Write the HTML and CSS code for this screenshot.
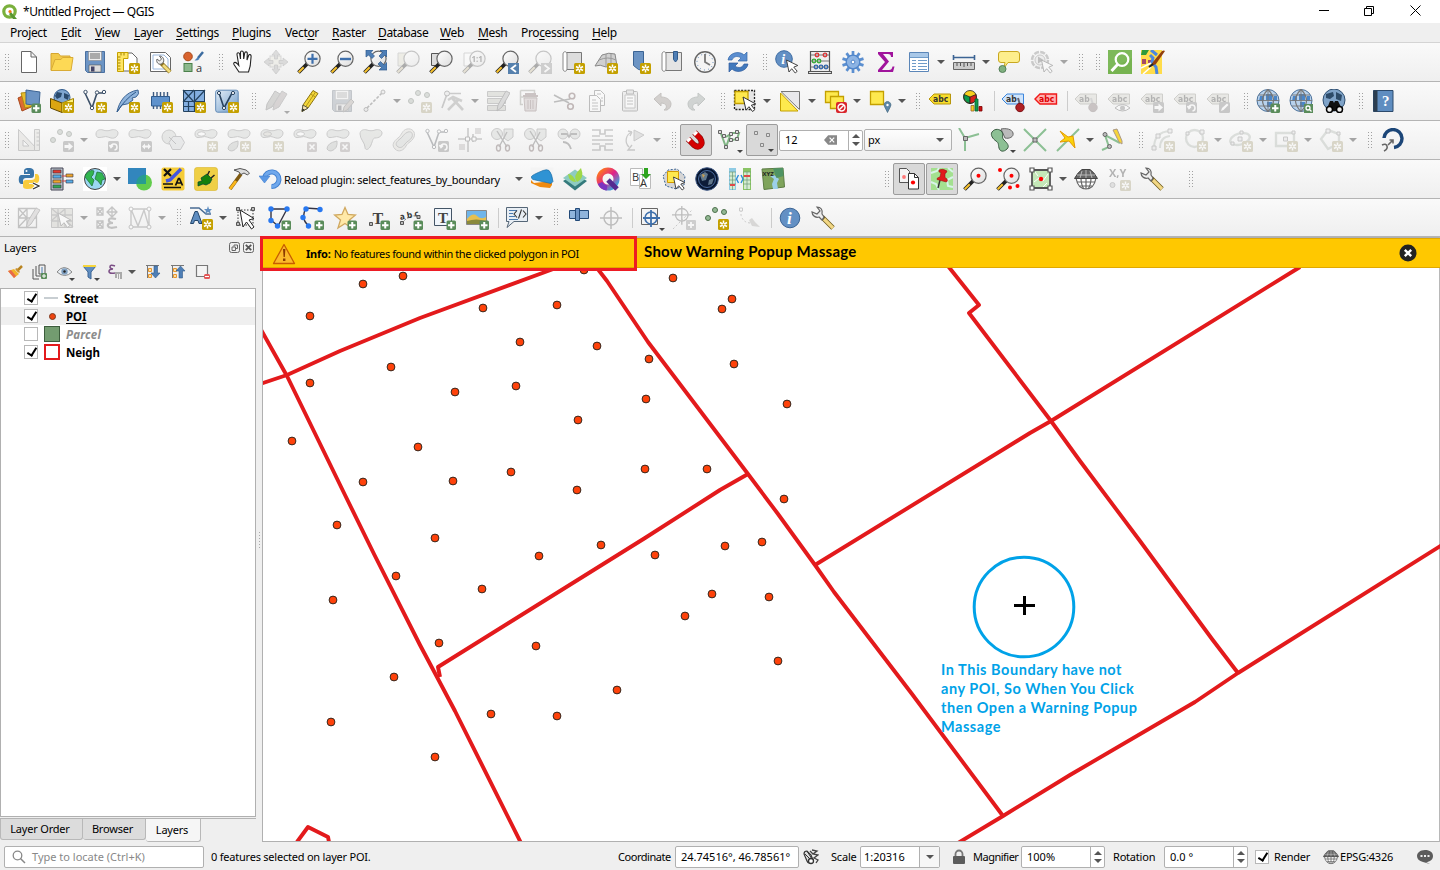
FILE: index.html
```html
<!DOCTYPE html>
<html lang="en">
<head>
<meta charset="utf-8">
<title>*Untitled Project — QGIS</title>
<link rel="stylesheet" href="styles.css">
</head>
<body>
<svg class="sprite" width="0" height="0">
<defs>
<linearGradient id="lens" x1="0" y1="0" x2="1" y2="1"><stop offset="0" stop-color="#fff"/><stop offset="1" stop-color="#ddd"/></linearGradient>
<linearGradient id="blue" x1="0" y1="0" x2="1" y2="1"><stop offset="0" stop-color="#e4eef8"/><stop offset="1" stop-color="#6f9bc8"/></linearGradient>
<linearGradient id="qring" x1="0" y1="0" x2="1" y2="1"><stop offset="0" stop-color="#ff7a1a"/><stop offset=".5" stop-color="#e0218a"/><stop offset="1" stop-color="#27b5e8"/></linearGradient>

<symbol id="b-star" viewBox="0 0 24 24"><rect x="13" y="13" width="11" height="11" rx="1.5" fill="#c4a000"/><path d="M18.500 14.500v8M15 16.500l7 4M22 16.500l-7 4" stroke="#fff" stroke-width="1.500"/><circle cx="18.500" cy="18.500" r="1" fill="#c4a000"/></symbol>
<symbol id="b-plus" viewBox="0 0 24 24"><rect x="14.500" y="14.500" width="9.500" height="9.500" rx="1.500" fill="#5a8c5a"/><path d="M19.250 16v6.500M16 19.250h6.500" stroke="#fff" stroke-width="2"/></symbol>
<symbol id="b-right" viewBox="0 0 24 24"><rect x="13" y="13" width="11" height="11" rx="1.500" fill="#777"/><path d="M14.500 17h4v-2.500l4.500 4-4.500 4V20h-4z" fill="#fff"/></symbol>
<symbol id="b-lr" viewBox="0 0 24 24"><rect x="13" y="13" width="11" height="11" rx="1.500" fill="#777"/><path d="M14 18.500l3-3v2h3v-2l3 3-3 3v-2h-3v2z" fill="#fff"/></symbol>
<symbol id="b-rot" viewBox="0 0 24 24"><rect x="13" y="13" width="11" height="11" rx="1.500" fill="#777"/><path d="M16 19a3 3 0 1 1 3.500 3M14.500 17l1.500 2.500 2-2" fill="none" stroke="#fff" stroke-width="1.500"/></symbol>
<symbol id="b-x" viewBox="0 0 24 24"><rect x="14" y="14" width="10" height="10" rx="1.500" fill="#a78b8b"/><path d="M16.500 16.500l5 5M21.500 16.500l-5 5" stroke="#fff" stroke-width="1.600"/></symbol>
<symbol id="b-pen" viewBox="0 0 24 24"><rect x="13" y="13" width="11" height="11" rx="1.500" fill="#777"/><path d="M15 22l1-3 5-4.500 1.500 1.500-5 5z" fill="#fff"/></symbol>
<symbol id="cursor" viewBox="0 0 24 24"><path d="M11.500 10l2.500 12 2.700-3.300 3.500 4.300 2-1.700-3.400-4.200 4-1.600z" fill="#fff" stroke="#333" stroke-width=".9"/></symbol>
<symbol id="mag" viewBox="0 0 24 24"><path d="M1.500 22.500l9-9" stroke="#222" stroke-width="3.800"/><path d="M1.700 22.300l5-5" stroke="#f6c12d" stroke-width="2"/><circle cx="15.500" cy="8.800" r="7.600" fill="url(#lens)" stroke="#666" stroke-width="1.200"/></symbol>
<symbol id="blob" viewBox="0 0 24 24"><path d="M1 6c0-4 4-5 7-4s5 1 8 0 7 0 7 3-3 6-7 5-4-2-8-1-7 1-7-3z" fill="#c2cec2" stroke="#777"/></symbol>
<symbol id="tag" viewBox="0 0 24 24"><path d="M1 10l5-5h16.500v10H6z"/></symbol>

<symbol id="new" viewBox="0 0 24 24"><path d="M4.500 1.500h9.500l5.500 5.500v15.500h-15zM14 1.500V7h5.500" fill="#fff" stroke="#666"/></symbol>
<symbol id="open" viewBox="0 0 24 24"><path d="M1 20V3.500h7.500l2 2.500H20v4" fill="#f2c94a" stroke="#d5a52f"/><path d="M1 20.500L5 9.500h6l1.500-2H23l-2 13z" fill="#fdd955" stroke="#d9ab35"/></symbol>
<symbol id="save" viewBox="0 0 24 24"><path d="M2.500 1.500h19v21h-17l-2-2z" fill="#6c94c4" stroke="#4a70a0"/><path d="M5.500 1.500h13v9h-13z" fill="#eee" stroke="#888" stroke-width=".6"/><path d="M7 4h10M7 6h10M7 8h10" stroke="#666"/><path d="M6 15h12v7H6z" fill="#ddd" stroke="#555" stroke-width=".6"/><path d="M8 16.500h3.500v5H8z" fill="#446"/></symbol>
<symbol id="layout" viewBox="0 0 24 24"><path d="M4 3h12l5 5v13H4z" fill="#fff" stroke="#666"/><path d="M1.500 2.500H12v6H7.500v13h-6z" fill="#ffe664" stroke="#c4a000"/><path d="M2 7h2.500M2 10h2.500M2 13h2.500M2 16h2.500M2 19h2.500M5 3v2.500M8 3v2.500" stroke="#a08000"/><use href="#b-star"/></symbol>
<symbol id="layoutmgr" viewBox="0 0 24 24"><path d="M1.500 2.500h15l5 5v14h-20z" fill="#fff" stroke="#666"/><path d="M4 5h11l4 4v10H4z" fill="#fff" stroke="#9bb8dd"/><path d="M12 13l9 9" stroke="#8a7020" stroke-width="4.200"/><path d="M14 15l7 7" stroke="#f2dc7c" stroke-width="2.800"/><path d="M8 9c-1 3 1 6 4.500 5l2-2c1-3-1-6-4-6l2 3-2 2z" fill="#eee" stroke="#666"/></symbol>
<symbol id="style" viewBox="0 0 24 24"><circle cx="6" cy="6.500" r="4.300" fill="#d8632e" stroke="#a84818"/><path d="M21 2l-5 6" stroke="#3c6ca0" stroke-width="2.500"/><path d="M12.500 10.500l3.500-3.500 1.500 2q-2 2-5 1.500z" fill="#4a7fb8"/><rect x="2" y="13.500" width="8" height="8" fill="#8cb88c" stroke="#4a804a"/><text x="14" y="21.500" class="glyph" font-size="11">a</text></symbol>
<symbol id="hand" viewBox="0 0 24 24"><path d="M8 22l-5-7.500c-1-2 1-3 3-1l1.800 2L6 4.500C5.800 2.500 8 2.200 8.700 4L9.500 9V2.500c0-2 2.600-2 2.900 0L12.700 9l1-6c.4-1.800 2.700-1.400 2.600.5L16 10l1.600-4.500c.7-1.700 2.800-1 2.500 1L19.200 16 17.500 22z" fill="#fff" stroke="#222" stroke-width="1.100"/></symbol>
<symbol id="panto" viewBox="0 0 24 24"><rect x="6" y="6" width="11" height="11" fill="#e8e3b0" stroke="#999"/><path d="M12 0l4 5h-2.500v4h-3V5H8zM12 24l4-5h-2.500v-4h-3v4H8zM0 12l5-4v2.500h4v3H5V16zM24 12l-5-4v2.500h-4v3h4V16z" fill="#aaa" stroke="#777" stroke-width=".7"/></symbol>
<symbol id="zin" viewBox="0 0 24 24"><use href="#mag"/><path d="M15.500 3.800v10M10.500 8.800h10" stroke="#3f70ac" stroke-width="2.200"/></symbol>
<symbol id="zout" viewBox="0 0 24 24"><use href="#mag"/><path d="M10 9h11" stroke="#3f70ac" stroke-width="2.400"/></symbol>
<symbol id="zfull" viewBox="0 0 24 24"><use href="#mag"/><path d="M3 0h7L8 2.500 11.500 6 9 8.500 5.500 5 3 7zM24 0v7l-2-2-3.500 3.500L16 6l3.500-3.500L17 0zM24 20h-8l2.500-2.500L15 14l2.500-2.500L21 15l3-2.500z" fill="#4e7eb5" stroke="#2f5a8c" stroke-width=".7"/></symbol>
<symbol id="zsel" viewBox="0 0 24 24"><path d="M2 3h12v13H2z" fill="#e4dd90" stroke="#999"/><use href="#mag"/></symbol>
<symbol id="zlayer" viewBox="0 0 24 24"><path d="M2.500 3.500h13v12h-13z" fill="#ddd" stroke="#555"/><use href="#mag"/></symbol>
<symbol id="znative" viewBox="0 0 24 24"><path d="M2 3h12v13H2z" fill="#fff" stroke="#999"/><use href="#mag"/><text x="9.500" y="12" class="glyph b" font-size="8">1:1</text></symbol>
<symbol id="zlast" viewBox="0 0 24 24"><use href="#mag"/><rect x="13" y="13" width="11" height="11" fill="#5580ad"/><path d="M21 15l-4.500 3.500L21 22" fill="none" stroke="#fff" stroke-width="1.800"/></symbol>
<symbol id="znext" viewBox="0 0 24 24"><use href="#mag"/><rect x="13" y="13" width="11" height="11" fill="#888"/><path d="M16.500 15l4.500 3.500-4.500 3.500" fill="none" stroke="#fff" stroke-width="1.800"/></symbol>
<symbol id="mapview" viewBox="0 0 24 24"><path d="M5.500 2.500h15v17h-15z" fill="#ddd" stroke="#777"/><path d="M2 4c0-3 4-3 4 0v15c0 3-4 3-4 0z" fill="#fff" stroke="#888"/><use href="#b-star"/></symbol>
<symbol id="map3d" viewBox="0 0 24 24"><path d="M1 16L8 5q7-3 13-1l2 12q-6-2-11 1-6-3-11-1z" fill="#d0d0d0" stroke="#888"/><path d="M5 10q9-4 17 0M12 4v13M17 4v11" fill="none" stroke="#999"/><use href="#b-star"/></symbol>
<symbol id="bmnew" viewBox="0 0 24 24"><path d="M6.500 1.500h10v19l-5-1-5-4z" fill="#6c94c4" stroke="#3c6494"/><use href="#b-star"/></symbol>
<symbol id="bmshow" viewBox="0 0 24 24"><path d="M5.500 2.500h16v18h-16z" fill="#e4e4e4" stroke="#777"/><path d="M2 4c0-3 4-3 4 0v15c0 3-4 3-4 0z" fill="#fff" stroke="#888"/><path d="M13.500 1.500h4v8l-2 2.500-2-2.500z" fill="#4e7eb5" stroke="#2f5a8c"/></symbol>
<symbol id="clock" viewBox="0 0 24 24"><circle cx="12" cy="12" r="10.300" fill="#f4f4f4" stroke="#666" stroke-width="1.400"/><circle cx="12" cy="12" r="8" fill="none" stroke="#5b86b8" stroke-dasharray="1 3.190"/><path d="M12 4v8l5 3" fill="none" stroke="#777" stroke-width="1.800"/></symbol>
<symbol id="refresh" viewBox="0 0 24 24"><path d="M2 10c1-7 11-10 16-5l3-3v9h-9l3-3c-4-3-8-1-9 2z" fill="#5b8ed0" stroke="#3467a8" stroke-width=".7"/><path d="M22 14c-1 7-11 10-16 5l-3 3v-9h9l-3 3c4 3 8 1 9-2z" fill="#4179bd" stroke="#2f5a9c" stroke-width=".7"/></symbol>
<symbol id="identify" viewBox="0 0 24 24"><circle cx="9" cy="9" r="8.300" fill="#6390c4" stroke="#3c6ca4"/><text x="6.200" y="14" class="serif-i" font-size="14">i</text><use href="#cursor"/></symbol>
<symbol id="abacus" viewBox="0 0 24 24"><path d="M2.500 21V1.500h19V21M.5 21.500h23v2H.5z" fill="#eee" stroke="#555" stroke-width="1.200"/><path d="M3 5h18M3 11h18M3 17h18" stroke="#777"/><g fill="none" stroke-width="1.300"><g stroke="#d33"><circle cx="9" cy="5" r="1.800"/><circle cx="17" cy="5" r="1.800"/></g><g stroke="#3a3"><circle cx="6" cy="11" r="1.800"/><circle cx="11" cy="11" r="1.800"/></g><g stroke="#36a"><circle cx="8" cy="17" r="1.800"/><circle cx="13" cy="17" r="1.800"/><circle cx="18" cy="17" r="1.800"/></g></g></symbol>
<symbol id="gear" viewBox="0 0 24 24"><path d="M12 1v22M5.500 3.100l13 17.800M1.500 8.600l21 6.800M1.500 15.400l21-6.800M5.500 20.900l13-17.800" stroke="#5b8fd0" stroke-width="2.700"/><circle cx="12" cy="12" r="6.800" fill="#8db4e4" stroke="#5186ca" stroke-width="1.300"/><circle cx="12" cy="12" r="1.900" fill="#fff" stroke="#4f84c8"/></symbol>
<symbol id="sigma" viewBox="0 0 24 24"><path d="M4 2h15v5h-2c0-2-1-3-3-3H9l6 7.500L8 20h7c2 0 3-1 3.500-3.500h2L19 22H4v-2l7-8-7-8z" fill="#a0149c"/></symbol>
<symbol id="table" viewBox="0 0 24 24"><path d="M2.500 2.500h19v19h-19z" fill="#fff" stroke="#5b86b8"/><path d="M3 3h18v4H3z" fill="#a9c8e8"/><path d="M3 7.500h18M5 10.500h4M11 10.500h9M5 13.500h4M11 13.500h9M5 16.500h4M11 16.500h9M5 19.500h4M11 19.500h9" stroke="#6f9bc8"/></symbol>
<symbol id="measure" viewBox="0 0 24 24"><path d="M1 7.500h22M1.500 5v5M22.500 5v5" stroke="#3c6494" stroke-width="1.600"/><path d="M1.500 12.500h21v7h-21z" fill="#ccc" stroke="#666"/><path d="M5 13v3M8.500 13v3M12 13v4M15.500 13v3M19 13v3" stroke="#555"/></symbol>
<symbol id="maptip" viewBox="0 0 24 24"><path d="M4 1.500h16q2.500 0 2.500 2.500v6q0 2.500-2.500 2.500h-9L7 18l1-5.500H4q-2.500 0-2.500-2.500V4q0-2.500 2.500-2.500z" fill="#fdee8c" stroke="#c9a820"/><circle cx="5.500" cy="19" r="3.500" fill="#7fb07f" stroke="#55805a"/></symbol>
<symbol id="action" viewBox="0 0 24 24"><circle cx="10" cy="10" r="8" fill="#eee" stroke="#777" stroke-width="2.500" stroke-dasharray="5 1.280"/><circle cx="10" cy="10" r="5" fill="#ddd" stroke="#777"/><path d="M8 6.500v7l5.500-3.500z" fill="#555"/><use href="#cursor"/></symbol>
<symbol id="qms" viewBox="0 0 24 24"><path d="M0 0h24v24H0z" fill="#76b350"/><path d="M0 0h24v8L0 20z" fill="#82bd60" opacity=".6"/><circle cx="14" cy="9.500" r="6.300" fill="none" stroke="#fff" stroke-width="2.200"/><path d="M10 14l-6.500 7" stroke="#fff" stroke-width="3"/></symbol>
<symbol id="osm" viewBox="0 0 24 24"><path d="M0 0h21v24H0z" fill="#ffdc4a"/><path d="M1 0h7l-3 5H0z" fill="#2c9a3a"/><path d="M1 9h4v5H1zM7 10h4v3H7z" fill="#a34a68"/><path d="M9 5l3 3-1 4 4 5 1 7M10 0l6 5" fill="none" stroke="#4b86e0" stroke-width="3"/><path d="M0 18l10-5M2 24l8-7" stroke="#fff" stroke-width="1.500"/><path d="M9 17l3-5L21 1q2-1 3 0L15 14z" fill="#93400e"/><path d="M8 17l4-3" stroke="#222" stroke-width="2"/></symbol>

<symbol id="dsm" viewBox="0 0 24 24"><path d="M1 9l9-4 4 13-9 4z" fill="#dd6a34" stroke="#a8481c"/><path d="M4 4l10-1 3 14-9 2z" fill="#e8bd2c" stroke="#b08a10"/><path d="M9 1l14 2-1 14-13-2z" fill="#6c94c4" stroke="#3c6494"/><use href="#b-plus"/></symbol>
<symbol id="gpkg" viewBox="0 0 24 24"><circle cx="12" cy="8.500" r="8" fill="#7fa6d0" stroke="#2f5a8c"/><path d="M7 3l5 1-1 4-4 2-2-3zM14 4l5 2-1 5-4-2z" fill="#2a4a6c"/><path d="M.5 9.500L12 14v9.500L.5 19z" fill="#dca512" stroke="#604800"/><path d="M23.500 9.500L12 14v9.500l11.500-4z" fill="#fff27a" stroke="#a08000"/><use href="#b-star"/></symbol>
<symbol id="shp" viewBox="0 0 24 24"><path d="M2 4l7 15 5-15h7" fill="none" stroke="#3c5068" stroke-width="1.600"/><g fill="#fff" stroke="#3c5068"><circle cx="2.500" cy="3" r="1.700"/><circle cx="9" cy="19" r="1.700"/><circle cx="14" cy="3.500" r="1.700"/><circle cx="21" cy="3" r="1.700"/></g></symbol>
<symbol id="shpnew" viewBox="0 0 24 24"><use href="#shp"/><use href="#b-star"/></symbol>
<symbol id="spatialite" viewBox="0 0 24 24"><path d="M1 23C3 13 9 3 22 1q2 4-2 7l-4 1 1 2q-5 5-11 5z" fill="#8fb4dc" stroke="#3c6494"/><path d="M1 23Q9 10 20 3" fill="none" stroke="#2f5a8c"/><use href="#b-star"/></symbol>
<symbol id="chip" viewBox="0 0 24 24"><path d="M4.500 3v4M8 3v4M11.500 3v4M15 3v4M18.500 3v4M4.500 17v3M8 17v3M11.500 17v3" stroke="#3c5a80" stroke-width="1.400"/><path d="M2.500 7.500h18v9.500h-18z" fill="#5f92cc" stroke="#2f5a8c"/><use href="#b-star"/></symbol>
<symbol id="mesh" viewBox="0 0 24 24"><path d="M1.500 1.500h21v21h-21z" fill="#83aee0" stroke="#24425f"/><path d="M12.500 1v22M1 12.500h22M1 17.500h11M1 1l11 12M12 1L1 13M12 13L23 1M6.500 13v10" fill="none" stroke="#24425f" stroke-width="1.200"/><use href="#b-star"/></symbol>
<symbol id="virtual" viewBox="0 0 24 24"><rect x=".7" y="1.200" width="22.500" height="22" rx="2" fill="url(#blue)" stroke="#5f88b5"/><path d="M4 4l5 15L17 4h3" fill="none" stroke="#27425f" stroke-width="1.600"/><g fill="#fff" stroke="#27425f"><circle cx="4" cy="4" r="1.600"/><circle cx="9" cy="19" r="1.600"/><circle cx="18" cy="4" r="1.600"/></g><use href="#b-star"/></symbol>
<symbol id="pencil" viewBox="0 0 24 24"><path d="M5 22.500L6 16 16 1.500l5 3L11 19z" fill="#f3d63a" stroke="#8c7410"/><path d="M13.500 5l5 3M18.500 3L8.500 18" stroke="#b59818" fill="none"/><path d="M5 22.500L6 16l5 3z" fill="#f7e3b0" stroke="#554"/><path d="M5 22.500l.6-3 2 1.300z" fill="#222"/></symbol>
<symbol id="edits" viewBox="0 0 24 24"><path d="M2 21l1-6L11 2l5 3-8 13z" fill="#9c9c8c" stroke="#666"/><path d="M9 21l1-6L18 2l5 3-8 13z" fill="#b89090" stroke="#777"/></symbol>
<symbol id="saveedit" viewBox="0 0 24 24"><use href="#save"/><path d="M13 23l1-5 7-8 3 3-7 8z" fill="#b98" stroke="#666"/></symbol>
<symbol id="line" viewBox="0 0 24 24"><path d="M4 19L19 4" stroke="#555" stroke-width="1.600" stroke-dasharray="3 1.500"/><circle cx="3" cy="20.500" r="2" fill="#ddd" stroke="#555"/><circle cx="20" cy="3" r="2" fill="#ddd" stroke="#555"/></symbol>
<symbol id="dots" viewBox="0 0 24 24"><g fill="#93b893" stroke="#4d704d"><circle cx="3" cy="12" r="2.500"/><circle cx="10" cy="4" r="2.500"/><circle cx="19" cy="6" r="2.500"/></g></symbol>
<symbol id="addpts" viewBox="0 0 24 24"><use href="#dots"/><use href="#b-star"/></symbol>
<symbol id="vertex" viewBox="0 0 24 24"><path d="M6 5L1 19M6 4.500h14" stroke="#777" stroke-width="1.700"/><circle cx="6" cy="4.500" r="2.500" fill="#ddd" stroke="#555"/><path d="M7 21L18 10M11 9l11 12M7 11l5-3 9 4" fill="none" stroke="#8c8c84" stroke-width="2.600"/></symbol>
<symbol id="multi" viewBox="0 0 24 24"><path d="M1.500 2.500h18v5h-18zM1.500 9.500h18v5h-18zM1.500 16.500h18v5h-18z" fill="#bcc09c" stroke="#777"/><path d="M11 22l1-6 8-14 4 2-8 14z" fill="#aaa" stroke="#555"/></symbol>
<symbol id="del" viewBox="0 0 24 24"><path d="M1.500 1.500h14v5M1.500 1.500v14H4M1.500 8H18" fill="none" stroke="#8c906c" stroke-width="1.500"/><path d="M4 7h15M7 7V5h9v2" fill="none" stroke="#a55" stroke-width="2"/><path d="M5 9h13l-1 13H6z" fill="#daa" stroke="#a55"/><path d="M9 11v9M11.500 11v9M14 11v9" stroke="#a55"/></symbol>
<symbol id="cut" viewBox="0 0 24 24"><path d="M2 6l15 8M2 13l16-3" stroke="#555" stroke-width="1.600"/><circle cx="20" cy="7" r="2.800" fill="none" stroke="#933" stroke-width="1.600"/><circle cx="18.500" cy="17.500" r="2.800" fill="none" stroke="#933" stroke-width="1.600"/></symbol>
<symbol id="copy" viewBox="0 0 24 24"><path d="M9.500 1.500h6l4 4v11h-10z" fill="#fff" stroke="#555"/><path d="M4.500 6.500h7l4 4v12h-11z" fill="#fff" stroke="#555"/><path d="M7 11h4M7 14h6M7 17h6M7 20h6M12 5h4M16 9h2M16 12h2" stroke="#666"/></symbol>
<symbol id="paste" viewBox="0 0 24 24"><rect x="4.500" y="2.500" width="15" height="19.500" rx="1" fill="#ddd" stroke="#555"/><path d="M7 6h10v13H7z" fill="#fff" stroke="#777"/><path d="M8.500 1h7v4h-7z" fill="#ccc" stroke="#555"/><path d="M9 9h6M9 12h6M9 15h6" stroke="#666"/></symbol>
<symbol id="undo" viewBox="0 0 24 24"><path d="M3 10l7-6v4c7 0 10 4 10 7 0 3-2 5-4 6h-3c4-2 3-7-3-7v3z" fill="#a8866c" stroke="#7c5c44"/></symbol>
<symbol id="redo" viewBox="0 0 24 24"><path d="M21 10l-7-6v4C7 8 4 12 4 15c0 3 2 5 4 6h3c-4-2-3-7 3-7v3z" fill="#7c9c90" stroke="#4c7464"/></symbol>
<symbol id="select" viewBox="0 0 24 24"><path d="M1.500 1.500h20v19h-20z" fill="#e6e6e6" stroke="#222" stroke-dasharray="2 1.300" stroke-width="1.300"/><path d="M2 2.500h13v12H2z" fill="#fee94e" stroke="#c4a000" stroke-width="1.300"/><path d="M10 8l3 13 3-3.300 3.500 4.800 2.300-1.800-3.500-4.500 4.500-1.200z" fill="#fff" stroke="#333"/></symbol>
<symbol id="selval" viewBox="0 0 24 24"><path d="M3 2.500h18.500v18z" fill="#e8e8ec" stroke="#777"/><path d="M2.500 4v18h17.500z" fill="#fee94e" stroke="#c4a000"/></symbol>
<symbol id="desel" viewBox="0 0 24 24"><path d="M2.500 2.500h13v11h-13z" fill="#fee94e" stroke="#c4a000" stroke-width="1.300"/><path d="M7.500 7.500h13v12h-13z" fill="#fee94e" stroke="#c4a000" stroke-width="1.300"/><rect x="13" y="13" width="11" height="11" rx="2" fill="#d9252b"/><circle cx="18.500" cy="18.500" r="3.500" fill="none" stroke="#fff" stroke-width="1.400"/><path d="M16 21l5-5" stroke="#fff" stroke-width="1.400"/></symbol>
<symbol id="selloc" viewBox="0 0 24 24"><path d="M2.500 2.500h13v13h-13z" fill="#fee94e" stroke="#c4a000" stroke-width="1.300"/><path d="M19.500 23.500l-3-6a3.400 3.400 0 1 1 6 0z" fill="#5d87a8" stroke="#44677f" stroke-width=".7"/><circle cx="19.500" cy="16" r="1.200" fill="#fff"/></symbol>
<symbol id="label" viewBox="0 0 24 24"><g fill="#f7dd2c" stroke="#b8960c"><use href="#tag"/></g><text x="5" y="13" class="tagtxt">abc</text></symbol>
<symbol id="diagram" viewBox="0 0 24 24"><circle cx="9" cy="8" r="6.500" fill="#f7cf1e" stroke="#222" stroke-width=".8"/><path d="M9 8L3 5.500q-1.500 7 6 9z" fill="#0c9a4a" stroke="#222" stroke-width=".8"/><path d="M9 8v6.500q8-1 6-9z" fill="#d9211c" stroke="#222" stroke-width=".8"/><path d="M14 10h3v12h-3z" fill="#11994c" stroke="#063" stroke-width=".8"/><path d="M10 16.500h3V22h-3z" fill="#f7cf1e" stroke="#963" stroke-width=".8"/><path d="M18 17.500h3V22h-3z" fill="#c11" stroke="#700" stroke-width=".8"/></symbol>
<symbol id="labpin" viewBox="0 0 24 24"><g fill="#cfe4fb" stroke="#3c86dc"><use href="#tag"/></g><text x="5" y="13" class="tagtxt">ab</text><path d="M17 9l2 7" stroke="#667" stroke-width="2"/><circle cx="19" cy="18.500" r="4.200" fill="#b01f24" stroke="#7c1014"/></symbol>
<symbol id="labred" viewBox="0 0 24 24"><g fill="#ffb0b0" stroke="#f01818" stroke-width="1.400"><use href="#tag"/></g><text x="5" y="13" class="tagtxt red">abc</text></symbol>
<symbol id="labg" viewBox="0 0 24 24"><g fill="#d5d0a8" stroke="#8c8760"><use href="#tag"/></g><text x="5" y="13" class="tagtxt">abc</text></symbol>
<symbol id="labg-pin" viewBox="0 0 24 24"><g fill="#d5d0a8" stroke="#8c8760"><use href="#tag"/></g><text x="5" y="13" class="tagtxt">ab</text><path d="M17 9l2 7" stroke="#999" stroke-width="2"/><circle cx="19" cy="18.500" r="4.200" fill="#a06060" stroke="#855"/></symbol>
<symbol id="labg-eye" viewBox="0 0 24 24"><use href="#labg"/><path d="M8 19q7.500-7 15 0-7.500 6-15 0z" fill="#fff" stroke="#555"/><circle cx="15.500" cy="19" r="2.500" fill="#777"/></symbol>
<symbol id="labg-mv" viewBox="0 0 24 24"><use href="#labg"/><use href="#b-right"/></symbol>
<symbol id="labg-rot" viewBox="0 0 24 24"><use href="#labg"/><use href="#b-rot"/></symbol>
<symbol id="labg-ed" viewBox="0 0 24 24"><use href="#labg"/><use href="#b-pen"/></symbol>
<symbol id="globe" viewBox="0 0 24 24"><circle cx="12" cy="11.500" r="11" fill="#b8d2ec" stroke="#4a6f98"/><path d="M4 7h4v5H3zM10 5h6v6h-6zM11 13h5v5h-5zM18 7h3v5h-3z" fill="#4b86c8"/><path d="M1 11.500h22M3 6h18M3 17h18M12 .5v22" stroke="#777" stroke-width=".9"/><path d="M12 .5q-11 11 0 22M12 .5q11 11 0 22" fill="none" stroke="#777" stroke-width="1.200"/></symbol>
<symbol id="globeadd" viewBox="0 0 24 24"><use href="#globe"/><use href="#b-plus"/></symbol>
<symbol id="globefind" viewBox="0 0 24 24"><use href="#globe"/><rect x="15" y="15" width="9" height="9" fill="#5a8c5a"/><circle cx="19" cy="19" r="2" fill="none" stroke="#fff" stroke-width="1.300"/><path d="M20.500 20.500l2 2" stroke="#fff" stroke-width="1.300"/></symbol>
<symbol id="metas" viewBox="0 0 24 24"><circle cx="12" cy="11" r="11" fill="#7fa3c8" stroke="#2f4f70"/><path d="M4 5l7-2 1 4-4 3-4-1zM14 3l6 3-1 6-5-2z" fill="#2d4b68"/><path d="M4 22l4-10h3l1 2 1-2h3l5 10z" fill="#111"/><circle cx="7.500" cy="20.500" r="3" fill="#eee" stroke="#000" stroke-width="1.500"/><circle cx="17.500" cy="20.500" r="3" fill="#eee" stroke="#000" stroke-width="1.500"/></symbol>
<symbol id="help" viewBox="0 0 24 24"><path d="M2.500 1.500h19.500v21H2.500z" fill="#5f8dc0" stroke="#2c4a6c"/><path d="M2.500 1.500h4v21h-4z" fill="#2c3e50"/><text x="11" y="17" class="serifw" font-size="15">?</text></symbol>

<symbol id="advdig" viewBox="0 0 24 24"><path d="M1.500 1.500v21h20z" fill="#dcd2c4" stroke="#777"/><path d="M6 12v6h6z" fill="#f6f6f6" stroke="#777"/><path d="M17.500 1.500h5v21h-5z" fill="#ddd8c4" stroke="#777"/><path d="M19.500 5h3M19.500 9h3M19.500 13h3M19.500 17h3" stroke="#777"/></symbol>
<symbol id="movef" viewBox="0 0 24 24"><use href="#dots"/><use href="#b-right"/></symbol>
<symbol id="rotf" viewBox="0 0 24 24"><use href="#blob"/><use href="#b-rot"/></symbol>
<symbol id="scalef" viewBox="0 0 24 24"><use href="#blob"/><use href="#b-lr"/></symbol>
<symbol id="simp" viewBox="0 0 24 24"><circle cx="8" cy="9" r="7" fill="#c2cec2" stroke="#777"/><path d="M8 14.500l4-6h8l3.500 6-4 7h-8z" fill="#ccd4dc" stroke="#778"/><path d="M8 9l7 7" stroke="#667"/></symbol>
<symbol id="ring" viewBox="0 0 24 24"><use href="#blob"/><ellipse cx="7.500" cy="6" rx="4" ry="2.200" fill="#fff" stroke="#777"/><use href="#b-star"/></symbol>
<symbol id="part" viewBox="0 0 24 24"><use href="#blob"/><path d="M1 21q0-6 10-8 1 8-6 10-3 0-4-2z" fill="#b4c0b4" stroke="#777"/><use href="#b-star"/></symbol>
<symbol id="fillr" viewBox="0 0 24 24"><use href="#blob"/><ellipse cx="7.500" cy="6" rx="4" ry="2.200" fill="#cdc8a0" stroke="#777"/><use href="#b-star"/></symbol>
<symbol id="delr" viewBox="0 0 24 24"><use href="#blob"/><ellipse cx="7.500" cy="6" rx="4" ry="2.200" fill="#fff" stroke="#777"/><use href="#b-x"/></symbol>
<symbol id="delp" viewBox="0 0 24 24"><use href="#blob"/><path d="M1 21q0-6 10-8 1 8-6 10-3 0-4-2z" fill="#b4c0b4" stroke="#777"/><use href="#b-x"/></symbol>
<symbol id="reshape" viewBox="0 0 24 24"><path d="M1 6c0-4 4-5 7-4s5 1 8 0 7 0 7 3-3 5-7 5c-2 0-2 2-4 7s-6 6-6 2c0-4-5-8-5-13z" fill="#c6cfba" stroke="#777"/></symbol>
<symbol id="offset" viewBox="0 0 24 24"><path d="M3 21c-4-4-1-8 3-11s4-8 9-9 9 3 7 8-6 5-8 9-7 7-11 3z" fill="#ddd6c0" stroke="#888"/><path d="M5 18c-2-2 0-5 3-7s4-6 8-7 5 2 4 5-5 4-7 7-5 5-8 2z" fill="#c2cec2" stroke="#777"/></symbol>
<symbol id="revline" viewBox="0 0 24 24"><use href="#shp"/><use href="#b-rot"/></symbol>
<symbol id="trim" viewBox="0 0 24 24"><path d="M0 11h24M10 0v24M15 6v8" stroke="#777" stroke-width="1.600"/><path d="M7.500 9h4v4h-4zM14 9h4v4h-4z" fill="#fff" stroke="#555"/><path d="M1 16h6v6H1zM17 0h6v6h-6z" fill="#baa"/></symbol>
<symbol id="split" viewBox="0 0 24 24"><circle cx="6" cy="6" r="5.500" fill="#c2cec2" stroke="#777"/><path d="M13 1h9v8l-5 4-4-3z" fill="#c2cec2" stroke="#777"/><path d="M6 3l10 16M16 4L8 19" stroke="#555" stroke-width="1.400"/><ellipse cx="7.500" cy="20" rx="2" ry="3" fill="none" stroke="#844" stroke-width="1.400"/><ellipse cx="16.500" cy="20" rx="2" ry="3" fill="none" stroke="#844" stroke-width="1.400"/></symbol>
<symbol id="merge" viewBox="0 0 24 24"><circle cx="6" cy="6" r="5" fill="#c2cec2" stroke="#777"/><circle cx="18" cy="6" r="5" fill="#c2cec2" stroke="#777"/><path d="M4 6h6l2 3 2-3h6M6 14q6 0 8 7" fill="none" stroke="#555" stroke-width="1.800"/></symbol>
<symbol id="mergeattr" viewBox="0 0 24 24"><path d="M2 2h8v4h5V2h8M2 12h21M2 8h8M15 8h8M2 22h8v-4h5v4h8M2 16h8M15 16h8" fill="none" stroke="#777" stroke-width="1.700"/></symbol>
<symbol id="rotpt" viewBox="0 0 24 24"><path d="M6 19A9 9 0 0 1 9 4M9 4l-4-1M9 4l-2 4M12 22H5l4-5" fill="none" stroke="#777" stroke-width="1.300"/><path d="M11 2l10 5-10 6z" fill="#bbb" stroke="#777"/></symbol>
<symbol id="magnet" viewBox="0 0 24 24"><path d="M4 11l6 6q4 3 6.500.5T16 10l-5.500-5.500" fill="none" stroke="#8c0a0a" stroke-width="6"/><path d="M4 11l6 6q4 3 6.500.5T16 10l-5.500-5.500" fill="none" stroke="#d40000" stroke-width="4.600"/><path d="M3.700 10.700l2.200 2.200M10.300 4.200l2.200 2.200" stroke="#fff" stroke-width="4.400"/></symbol>
<symbol id="snapv" viewBox="0 0 24 24"><path d="M3 3l6 16 5-14M9 9l6-4h7l-2 6-9 2" fill="none" stroke="#7fb583" stroke-width="2"/><g fill="#ddd" stroke="#666"><path d="M1.500 2.500h3v3h-3zM5.500 6.500h3v3h-3zM7.500 17.500h3v3h-3zM12.500 4.500h3v3h-3zM12.500 10.500h3v3h-3zM18.500 2.500h3v3h-3zM18.500 9.500h3v3h-3z"/></g></symbol>
<symbol id="snapt" viewBox="0 0 24 24"><path d="M4.500 3.500h3v3h-3zM16.500 5.500h3v3h-3zM10.500 15.500h3v3h-3z" fill="#ddd" stroke="#888"/></symbol>
<symbol id="topo" viewBox="0 0 24 24"><path d="M2 0l6 10 14-4M8 10v13" fill="none" stroke="#8cc094" stroke-width="2"/><path d="M6.500 8.500h4v4h-4z" fill="#bbb" stroke="#666"/></symbol>
<symbol id="overlap" viewBox="0 0 24 24"><path d="M11 1c5-1 11 0 12 4s-4 6-8 5z" fill="#bbb" stroke="#666"/><path d="M2 4c3-4 8-3 10 0s-1 5 2 8 6 6 3 9-7 3-8-1 0-5-3-7-6-6-4-9z" fill="#8cc094" stroke="#3c5c44"/></symbol>
<symbol id="xsect" viewBox="0 0 24 24"><path d="M1 1l22 22M23 1L1 23" stroke="#8cc094" stroke-width="2"/><path d="M10 10h4v4h-4z" fill="#bbb" stroke="#666"/></symbol>
<symbol id="selfsnap" viewBox="0 0 24 24"><path d="M23 1L1 23" stroke="#8cc094" stroke-width="2"/><path d="M4 3l8 6 5-1 2 12-6-7-9 1 5-4z" fill="#fad20a" stroke="#e59a00"/></symbol>
<symbol id="trace" viewBox="0 0 24 24"><path d="M1 22l7-3L4 7l15 8" fill="none" stroke="#8cc094" stroke-width="2"/><circle cx="4" cy="6.500" r="2" fill="#bbb" stroke="#666"/><circle cx="8.500" cy="18.500" r="2" fill="#bbb" stroke="#666"/><path d="M12 2l4-1 5 12v3l-3-2z" fill="#f7d53a" stroke="#a98"/></symbol>
<symbol id="arc" viewBox="0 0 24 24"><path d="M3 20Q3 4 19 3M9 20Q9 9 19 8" fill="none" stroke="#9ab89a" stroke-width="2"/><path d="M1 18h4v4H1zM17 1h4v4h-4zM5 6h4v4H5z" fill="#ddd" stroke="#777"/><use href="#b-star"/></symbol>
<symbol id="circ" viewBox="0 0 24 24"><circle cx="10.500" cy="10.500" r="8.500" fill="none" stroke="#9ab89a" stroke-width="2.400"/><path d="M2 4h3v3H2zM16 2h4v4h-4z" fill="#ddd" stroke="#777"/><use href="#b-star"/></symbol>
<symbol id="ell" viewBox="0 0 24 24"><ellipse cx="11" cy="11" rx="10" ry="5.500" fill="none" stroke="#9ab89a" stroke-width="2.400" transform="rotate(-15 11 11)"/><path d="M9 9h4v4H9zM11 3h3v3h-3zM2 14h3v3H2z" fill="#ddd" stroke="#777"/><use href="#b-star"/></symbol>
<symbol id="rectg" viewBox="0 0 24 24"><path d="M2 5h18v13H2z" fill="none" stroke="#9ab89a" stroke-width="2.400"/><path d="M9.500 9h4v4h-4zM18 3h3v3h-3z" fill="#ddd" stroke="#777"/><use href="#b-star"/></symbol>
<symbol id="polyg" viewBox="0 0 24 24"><path d="M9 2l11 4v9L9 21 2 11z" fill="none" stroke="#9ab89a" stroke-width="2.400"/><path d="M7 1h4v4H7zM18 4h3v3h-3z" fill="#ddd" stroke="#777"/><use href="#b-star"/></symbol>
<symbol id="qgisrs" viewBox="0 0 24 24"><path d="M4 10a9 9 0 1 1 10 9.500" fill="none" stroke="#1c4678" stroke-width="3.400"/><path d="M2 17q4-2 5 1t-3 5M8 17l5-5M9.500 12H13v3.500" fill="none" stroke="#666" stroke-width="1.600"/></symbol>

<symbol id="python" viewBox="0 0 24 24"><path d="M12 1c-5 0-5 2-5 4v2h6v1H4c-3 0-3 9 0 9h2v-3c0-2 1-3 3-3h5c2 0 3-1 3-3V5c0-3-2-4-5-4z" fill="#3a75a8"/><path d="M11 22c-4 0-5-1-5-3v-3c0-2 1-3 3-3h5c3 0 4-1 4-3V7h2c3 0 3 9 0 9h-8v1h5v2c0 2-2 3-6 3z" fill="#f8cb3c"/><circle cx="9.500" cy="4" r="1" fill="#fff"/><path d="M16 16l6 3-6 3" fill="none" stroke="#fff" stroke-width="3"/><path d="M16 16l6 3-6 3" fill="none" stroke="#333" stroke-width="1.300"/></symbol>
<symbol id="rack" viewBox="0 0 24 24"><path d="M1 1h12v22H1z" fill="#b9c0c8" stroke="#445"/><g stroke="#334" stroke-width=".6"><path d="M3 3h8v3H3z" fill="#e03a2e"/><path d="M3 8h8v3H3z" fill="#58aee8"/><path d="M3 13h8v3H3z" fill="#f0a52c"/><path d="M3 18h8v3H3z" fill="#31a852"/><path d="M16 7h7v3h-7z" fill="#f0a52c"/><path d="M16 13h7v3h-7z" fill="#58aee8"/></g><path d="M12 9h4M12 14h4" stroke="#c44"/></symbol>
<symbol id="earth" viewBox="0 0 24 24"><path d="M0 0h24v24H0z" fill="#fff"/><circle cx="12" cy="12" r="10.500" fill="#9ad8f2" stroke="#444"/><path d="M3 7q5-5 8-3l-1 4-2 2 3 3-2 6-3-4-4-5zM14 5l5 1 3 6-3 1-1 5-3-4-3-2z" fill="#31b54f" stroke="#1a6e37" stroke-width=".7"/></symbol>
<symbol id="cloud" viewBox="0 0 24 24"><circle cx="16" cy="15.500" r="8" fill="#62cc4c"/><path d="M0 1h18v16H0z" fill="#3286bd"/><path d="M18 8v9H8.500a8 8 0 0 1 9.500-9z" fill="#279c90"/></symbol>
<symbol id="xa" viewBox="0 0 24 24"><rect x=".5" y=".5" width="23" height="23" rx="2" fill="#f5cc38"/><path d="M3 2l7 7M10 2L3 9" stroke="#111" stroke-width="2.200"/><path d="M20 2L9 13l-4 1" stroke="#4455e0" stroke-width="3.400" fill="none"/><path d="M2 17h10M3 20.500h17" stroke="#111" stroke-width="1.500"/><path d="M14.500 18.500l3-7h1l3 7M16 16h4.500" stroke="#111" stroke-width="1.700" fill="none"/></symbol>
<symbol id="plug" viewBox="0 0 24 24"><rect x=".5" y=".5" width="23" height="23" rx="2.500" fill="#efcf45" stroke="#d8b52c" stroke-width=".6"/><path d="M4 15l4-1-1-3 3-2 3-2 5 5-2 4-4 2-3-1-5 2z" fill="#15800c" stroke="#043" stroke-width=".7"/><path d="M13.500 8l2-4M17 11l3.500-3" stroke="#222" stroke-width="1.500"/></symbol>
<symbol id="hammer" viewBox="0 0 24 24"><path d="M3 22L14 7" stroke="#7f5a10" stroke-width="3.600"/><path d="M3 22l6-8" stroke="#fcb81c" stroke-width="2.600"/><path d="M7 3q6-3 12 0l3.500 3-2 2-3.500-2-3 1.500-2-2.500z" fill="#ddd" stroke="#444" stroke-width=".9"/></symbol>
<symbol id="reload" viewBox="0 0 24 24"><path d="M5.500 11a7.300 7.300 0 1 1 7 8.500" fill="none" stroke="#3f7fd0" stroke-width="5"/><path d="M5.500 11a7.300 7.300 0 1 1 7 8.500" fill="none" stroke="#70a8ec" stroke-width="3.200"/><path d="M0 9h11l-5.500 7z" fill="#5b98e4" stroke="#3f7fd0" stroke-width=".6"/></symbol>
<symbol id="slab" viewBox="0 0 24 24"><path d="M.5.500h23v23H.5z" fill="#f4f4f4"/><path d="M1 13l3 3 18-2v4l-2 3-10-1-9-4z" fill="#ee8a10"/><path d="M1.500 9.500Q2 8 13 3.500q4-1.500 6 0 3 3 4 11l-2 2L3 12.500q-2-1-1.500-3z" fill="#2f93d4" stroke="#1d6ea8" stroke-width=".7"/></symbol>
<symbol id="leaf" viewBox="0 0 24 24"><path d="M0 14l12-7 12 7-12 9.500z" fill="#347a7c"/><path d="M0 11l12-8.500L24 11l-12 8.500z" fill="#8ecbc2"/><path d="M5 7q5 0 8 8-7 0-8-8zM18 1q4 10-4 14-5-6 4-14z" fill="#9fd848"/></symbol>
<symbol id="qplug" viewBox="0 0 24 24"><circle cx="12" cy="12" r="8.500" fill="none" stroke="url(#qring)" stroke-width="6"/><path d="M12 13l9 9" stroke="#552a90" stroke-width="5"/><path d="M4 16a9 9 0 0 0 7 5" stroke="#7a35c0" stroke-width="5" fill="none"/></symbol>
<symbol id="babel" viewBox="0 0 24 24"><path d="M1.500 1.500h12v17h-12zM10.500 7.500h11v14h-11z" fill="#fff" stroke="#bbb"/><text x="3" y="14" class="glyph" font-size="11">B</text><text x="11" y="20" class="glyph" font-size="11">A</text><path d="M15 1h4v6h3l-5 5-5-5h3z" fill="#2fa420"/></symbol>
<symbol id="selfeat" viewBox="0 0 24 24"><path d="M1 9l5-6 9-1 8 7-1 9-8 4-10-3z" fill="#d6d6d6" stroke="#3c6494" stroke-dasharray="2 1.500"/><path d="M5.500 4.500h11v11h-11z" fill="#fee94e" stroke="#d49a00"/><use href="#cursor"/></symbol>
<symbol id="night" viewBox="0 0 24 24"><circle cx="12" cy="12" r="11.300" fill="#06142e" stroke="#405a86"/><circle cx="12" cy="12" r="8.500" fill="#0d1c38" stroke="#5c80b8" stroke-width=".8"/><path d="M5 8l5-3 3 2-2 6-4 1zM14 13l5-2-2 6-4 1z" fill="#62788c"/><path d="M7 7l3 1-2 3z" fill="#caa050"/></symbol>
<symbol id="compare" viewBox="0 0 24 24"><path d="M1 1h7v22H1z" fill="#8fcbe4"/><path d="M15 1h8v22h-8z" fill="#8ac465"/><path d="M2 5h5v17H2zM16 5h6v17h-6z" fill="#d4ebd0"/><path d="M1 5h7M1 9h7M1 13h7M1 17h7M15 5h8M15 9h8M15 13h8M15 17h8M4.500 5v18M19 5v18" stroke="#6a9a78" stroke-width=".7"/><path d="M2 18h5M16 9h6" stroke="#e04848" stroke-width="2"/><path d="M10.500 8l-2 4 2 4M13 8l2 4-2 4" fill="none" stroke="#2a8ed8" stroke-width="1.400"/></symbol>
<symbol id="xyz" viewBox="0 0 24 24"><path d="M1 2l21-1 1.500 19L3 22.500z" fill="#7fa45c" stroke="#5c7c44"/><path d="M9 9l4 3-2 5 1 5h5l-1-6 2-4-5-4z" fill="#9cd0ea"/><path d="M12 1.500l10-.5.500 8-7 2z" fill="#4f9464"/><text x="1.500" y="8.500" class="xyz">XYZ</text></symbol>
<symbol id="copydot" viewBox="0 0 24 24"><path d="M2.500 1.500h7l3 3v11h-10z" fill="#f4f4f4" stroke="#555"/><circle cx="7" cy="10" r="1.900" fill="#f77"/><path d="M11.500 6.500h6l4 4v11.500h-10z" fill="#fff" stroke="#333"/><path d="M17.500 6.500v4h4" fill="none" stroke="#333"/><circle cx="16" cy="15.500" r="2.100" fill="#f00"/></symbol>
<symbol id="pin" viewBox="0 0 24 24"><path d="M1 1h22v22H1z" fill="#a4e090"/><path d="M1 6l6-2 2-3M1 15l5 2 3 6M23 10l-6 3 1 6 5 1M18 1l5 4" fill="none" stroke="#d8f4e8" stroke-width="2"/><path d="M10 13l-2 8" stroke="#333" stroke-width="1.400"/><path d="M9 3q4-2 8 1l-1 2-1 .5v4l2 1.500q1 2-.5 3L7 12.500q0-2 1.500-2L10 10l1-4.500L9 5z" fill="#e01b1b" stroke="#981010" stroke-width=".6"/></symbol>
<symbol id="magdot" viewBox="0 0 24 24"><use href="#mag"/><circle cx="15.500" cy="8.800" r="2" fill="#f00"/></symbol>
<symbol id="magdots" viewBox="0 0 24 24"><use href="#mag"/><g fill="#f00"><circle cx="15.500" cy="8.800" r="2"/><circle cx="4" cy="3" r="2"/><circle cx="14" cy="20.500" r="2"/><circle cx="21.500" cy="19" r="2"/></g></symbol>
<symbol id="extent" viewBox="0 0 24 24"><path d="M3 3h18v18H3z" fill="#c4e8b8" stroke="#555" stroke-width="1.800"/><path d="M5 15l5-4 4 3 5-7M6 5l3 4M14 20l4-4" stroke="#fff" fill="none"/><g fill="#fff" stroke="#555" stroke-width="1.200"><path d="M1 1h4v4H1zM19 1h4v4h-4zM1 19h4v4H1zM19 19h4v4h-4z"/></g><circle cx="12" cy="12" r="2.200" fill="#f00"/></symbol>
<symbol id="dome" viewBox="0 0 24 24"><path d="M2 11q2 11 10 11t10-11z" fill="#fff" stroke="#666" stroke-width="1.200"/><path d="M3 15h18M6 19h12M12 11v11M7 11q0 7 3 11M17 11q0 7-3 11" fill="none" stroke="#666" stroke-width="1.200"/><path d="M.5 11.500Q4 5 8 2.500h8q4 2.500 7.500 9z" fill="#666" stroke="#444"/><path d="M3 8h18M8 4L6 11M16 4l2 7M12 3v8" stroke="#ccc" stroke-width=".8"/></symbol>
<symbol id="xy" viewBox="0 0 24 24"><text x="2" y="9.500" class="glyph b" font-size="11">X,Y</text><circle cx="5.500" cy="18" r="2.500" fill="#bbb" stroke="#777"/><use href="#b-star"/></symbol>
<symbol id="wrench" viewBox="0 0 24 24"><path d="M11 11l11 11" stroke="#6c5a1c" stroke-width="4.800"/><path d="M13 13l9 9" stroke="#f2d784" stroke-width="3.200"/><path d="M1 6c0 4 4 6 7 5l3 3 2-3-2-3c1-4-1-7-5-7l3 4-3 3z" fill="#eee" stroke="#666" stroke-width="1.200"/></symbol>

<symbol id="meshed" viewBox="0 0 24 24"><path d="M1.500 2.500h18v19h-18zM1.500 12h18M10 3v19M1.500 2.500L10 12M10 3L1.500 12M1.500 21L10 12" fill="#f4f4f4" stroke="#666" stroke-width="1.300"/><path d="M9 22l2-7L19 2l4 2-9 14z" fill="#c4b4b4" stroke="#666"/></symbol>
<symbol id="meshsel" viewBox="0 0 24 24"><path d="M1.500 2.500h21v19h-21z" fill="#c9c4a4" stroke="#777"/><path d="M1 9h22M8 3v19M15 3v19M1 15h22M1 2l22 19M15 3L1 15" stroke="#777" stroke-width="1.300"/><path d="M8 7l3 13 3-3.300 3.500 4.800 2.300-1.800-3.500-4.500 4.500-1.200z" fill="#fff" stroke="#555"/></symbol>
<symbol id="mesht" viewBox="0 0 24 24"><path d="M2 2h6v7H2zM2 15h6v7H2zM2 2l6 7M8 2L2 9M2 15l6 7M8 15l-6 7M17 1l5 5-5 5-5-5zM12 6h10M17 1v10" fill="none" stroke="#666" stroke-width="1.300"/><path d="M21 13q-8-2-7 2 1 2 4 2-6 0-5 3t9 1" fill="none" stroke="#666" stroke-width="2.200"/></symbol>
<symbol id="meshv" viewBox="0 0 24 24"><path d="M3 3h18v18H3zM3 3l7 17L16 4l5 17" fill="none" stroke="#777" stroke-width="1.400"/><g fill="#fff" stroke="#666"><circle cx="3" cy="3" r="2"/><circle cx="21" cy="3" r="2"/><circle cx="3" cy="21" r="2"/><circle cx="21" cy="21" r="2"/></g></symbol>
<symbol id="annlayer" viewBox="0 0 24 24"><path d="M1 2h9l7 6h5" fill="none" stroke="#4a6c94" stroke-width="1.500"/><path d="M1.500 17.500L6 5.500h2.500l4.500 12H10l-1-3H5.500l-1 3z" fill="#5f8dc0" stroke="#23466c"/><path d="M19 0l1 3h3l-2 2 1 3-3-2-3 2 1-3-2-2h3z" fill="#5f8dc0"/><use href="#b-star"/></symbol>
<symbol id="annsel" viewBox="0 0 24 24"><path d="M4 4h15v15H4z" fill="none" stroke="#333" stroke-dasharray="1.500 1.500"/><path d="M2.500 1.500h3v3h-3zM17.500 1.500h3v3h-3zM2.500 16.500h3v3h-3z" fill="#bbb" stroke="#555"/><path d="M6 4l3 17 3.500-5 5 7 2.500-2-5-7 5-1.500z" fill="#fff" stroke="#222"/></symbol>
<symbol id="annpoly" viewBox="0 0 24 24"><path d="M4 3h16l-9 17-7-6z" fill="none" stroke="#334" stroke-width="1.400"/><g fill="#2878f0"><circle cx="4" cy="3" r="2.700"/><circle cx="20" cy="3" r="2.700"/><circle cx="4" cy="14.500" r="2.700"/><circle cx="10.500" cy="20" r="2.700"/></g><use href="#b-plus"/></symbol>
<symbol id="annline" viewBox="0 0 24 24"><path d="M20 3L6 2Q0 13 9 20" fill="none" stroke="#334" stroke-width="1.400"/><g fill="#2878f0"><circle cx="6" cy="3" r="2.700"/><circle cx="20" cy="3.500" r="2.700"/><circle cx="3" cy="11.500" r="2.700"/><circle cx="8.500" cy="20" r="2.700"/></g><use href="#b-plus"/></symbol>
<symbol id="annstar" viewBox="0 0 24 24"><path d="M12 1.500l3 7 7.500.5-6 5 2 8-6.500-4.500L5 22l2.500-8-6-5 7.500-.5z" fill="#ffe9a8" stroke="#d0a860" stroke-width="1.300"/><use href="#b-plus"/></symbol>
<symbol id="anntext" viewBox="0 0 24 24"><path d="M3.500 16.500h3v3h-3z" fill="#bbb" stroke="#555"/><text x="6.500" y="18" class="serifb" font-size="16">T</text><use href="#b-plus"/></symbol>
<symbol id="anncurve" viewBox="0 0 24 24"><text x="1" y="13" class="glyph b" font-size="8.500" transform="rotate(-12 6 12)">a b c</text><path d="M3 17q8-10 17-6" fill="none" stroke="#555" stroke-dasharray="2 1.500"/><path d="M1.500 15.500h3v3h-3zM18 9.500h3v3h-3z" fill="#bbb" stroke="#555"/><use href="#b-plus"/></symbol>
<symbol id="annrect" viewBox="0 0 24 24"><path d="M2.500 2.500h17v17h-17z" fill="#f1f6fc" stroke="#456"/><text x="6" y="17" class="serifb" font-size="15">T</text><use href="#b-plus"/></symbol>
<symbol id="annpic" viewBox="0 0 24 24"><path d="M1.500 4.500h20v14h-20z" fill="#6fb5ea" stroke="#888"/><path d="M2 13q6-7 10-3t9 1v7H2z" fill="#e7c04e"/><path d="M2 15q9-3 19 0v3H2z" fill="#8a8a3c"/><use href="#b-plus"/></symbol>
<symbol id="html" viewBox="0 0 24 24"><path d="M1.500 1.500h21v14H9l-7 6 2-6H1.500z" fill="#e8eef4" stroke="#567"/><path d="M4 4.500h8M4 7.500h4M4 10.500h6M4 13.500h9" stroke="#4a7ab0"/><path d="M12 4.500L9 8l3 3.500M16.500 3.500l-3 9M18 4.500L21 8l-3 3.500" fill="none" stroke="#333" stroke-width="1.100"/></symbol>
<symbol id="gcp" viewBox="0 0 24 24"><path d="M2.500 4.500h19v8h-19z" fill="#8fb4dc" stroke="#234a78"/><path d="M8.500 2.500h4v12h-4z" fill="#6c94c4" stroke="#234a78"/></symbol>
<symbol id="cross" viewBox="0 0 24 24"><circle cx="12" cy="12" r="7" fill="none" stroke="#555" stroke-width="1.400"/><path d="M12 1v22M1 12h22" stroke="#555" stroke-width="1.500"/></symbol>
<symbol id="crossb" viewBox="0 0 24 24"><path d="M2.500 2.500h16v16h-16z" fill="#f4f4f4" stroke="#666"/><circle cx="12" cy="12" r="6" fill="none" stroke="#3f70ac" stroke-width="1.600"/><path d="M12 4v17M4 12h17" stroke="#3f70ac" stroke-width="1.800"/></symbol>
<symbol id="crossp" viewBox="0 0 24 24"><g transform="translate(-1 -2) scale(.9)"><use href="#cross" width="24" height="24"/></g><path d="M1 23L20 4" stroke="#777" stroke-dasharray="2 2"/><rect x="14" y="14" width="10" height="10" rx="1" fill="#888"/><path d="M19 16v6M16 19h6" stroke="#fff" stroke-width="1.800"/></symbol>
<symbol id="trk" viewBox="0 0 24 24"><path d="M3 4v5q2 8 10 8" fill="none" stroke="#777" stroke-dasharray="2 2"/><path d="M1.500 2h3v3h-3z" fill="#fff" stroke="#777"/><path d="M11 14l3-2 3 4 5 5-8-1z" fill="#aaa294"/></symbol>
<symbol id="info" viewBox="0 0 24 24"><circle cx="12" cy="12" r="9.800" fill="#6390c4" stroke="#3c6494"/><text x="9" y="18" class="serif-i" font-size="17">i</text></symbol>

<symbol id="p-brush" viewBox="0 0 16 16"><path d="M15 2L10 7" stroke="#b98420" stroke-width="2.500"/><path d="M1 7l6-2 5 5-5 4z" fill="#f2b32a"/><path d="M1 7l3-1 5 6-2 2z" fill="#e8694a"/><path d="M8 5l4 4 1-1-3-4z" fill="#c89030"/></symbol>
<symbol id="p-add" viewBox="0 0 16 16"><path d="M4 2v10h6M1 5v10h6M7 5V1h6v9H7z" fill="none" stroke="#555"/><path d="M10 3v9" stroke="#4a7ab0"/><rect x="9" y="9" width="6" height="6" rx="1" fill="#5a8c5a"/><path d="M12 10v4M10 12h4" stroke="#fff"/></symbol>
<symbol id="p-eye" viewBox="0 0 16 16"><path d="M0 8q7-9 15 0-7 7-15 0z" fill="#e8eef4" stroke="#888"/><circle cx="7.500" cy="7.500" r="3.200" fill="#7f9fc0"/><circle cx="7.500" cy="7.500" r="1.200" fill="#222"/></symbol>
<symbol id="p-filter" viewBox="0 0 16 16"><path d="M1 2h13L9 8v7l-3-2V8z" fill="#5f8dc0" stroke="#3c6494"/><path d="M1 1h13v2H1z" fill="#f5d53e"/></symbol>
<symbol id="p-eps" viewBox="0 0 16 16"><path d="M8 2Q3 0 3 3 3 4.500 6 5 2 5 2 7.500T8 9" fill="none" stroke="#7c4f86" stroke-width="1.600"/><path d="M8 8h7v7h-2v-5h-1v5h-1v-5h-1v4H8z" fill="#aaa"/></symbol>
<symbol id="p-exp" viewBox="0 0 16 16"><path d="M2.500 1v13M1 1.500h13" stroke="#777"/><path d="M3.500 4.500h3v3h-3zM3.500 10.500h3v3h-3z" fill="#fbe0a8" stroke="#e8962c"/><path d="M9 2h3.500v7H15l-4.500 5L6 9h3z" fill="#4e7eb5" stroke="#2f5a8c" stroke-width=".6"/></symbol>
<symbol id="p-col" viewBox="0 0 16 16"><path d="M2.500 1v13M1 1.500h13" stroke="#777"/><path d="M3.500 4.500h3v3h-3zM3.500 10.500h3v3h-3z" fill="#fbe0a8" stroke="#e8962c"/><path d="M9 14h3.500V7H15l-4.500-5L6 7h3z" fill="#4e7eb5" stroke="#2f5a8c" stroke-width=".6"/></symbol>
<symbol id="p-rem" viewBox="0 0 16 16"><path d="M1.500 1.500h11v11h-11z" fill="#f4f4f4" stroke="#777" stroke-width="1.200"/><rect x="9" y="10" width="6" height="5" rx="1.500" fill="#e25858"/><path d="M10 12.500h4" stroke="#fff"/></symbol>
</defs>
</svg>

<header class="titlebar">
  <svg class="logo" viewBox="0 0 16 16"><circle cx="7.500" cy="7.500" r="5.700" fill="none" stroke="#7ab03c" stroke-width="3.200"/><path d="M9 8l6 7h-4L7 10z" fill="#589632"/><circle cx="8" cy="7.500" r="1.600" fill="#ee7913"/></svg>
  <span class="title">*Untitled Project — QGIS</span>
  <svg class="winbtns" viewBox="0 0 102 12"><path d="M0 5.500h10M45.500 3.500h7v7h-7zM47.500 3V1.500h7v7H53" fill="none" stroke="#000"/><path d="M91.500.500l10 10M101.500.500l-10 10" stroke="#000"/></svg>
</header>
<nav class="menubar">
  <span class="m1">Pro<u>j</u>ect</span><span class="m2"><u>E</u>dit</span><span class="m3"><u>V</u>iew</span><span class="m4"><u>L</u>ayer</span><span class="m5"><u>S</u>ettings</span><span class="m6"><u>P</u>lugins</span><span class="m7">Vect<u>o</u>r</span><span class="m8"><u>R</u>aster</span><span class="m9"><u>D</u>atabase</span><span class="m10"><u>W</u>eb</span><span class="m11"><u>M</u>esh</span><span class="m12">Pro<u>c</u>essing</span><span class="m13"><u>H</u>elp</span>
</nav>

<div class="toolbar"><i class="grip first"></i><b class="tb"><svg><use href="#new"/></svg></b><b class="tb"><svg><use href="#open"/></svg></b><b class="tb"><svg><use href="#save"/></svg></b><b class="tb"><svg><use href="#layout"/></svg></b><b class="tb"><svg><use href="#layoutmgr"/></svg></b><b class="tb"><svg><use href="#style"/></svg></b>
<i class="grip"></i><b class="tb"><svg><use href="#hand"/></svg></b><b class="tb off"><svg><use href="#panto"/></svg></b><b class="tb"><svg><use href="#zin"/></svg></b><b class="tb"><svg><use href="#zout"/></svg></b><b class="tb"><svg><use href="#zfull"/></svg></b><b class="tb off"><svg><use href="#zsel"/></svg></b><b class="tb"><svg><use href="#zlayer"/></svg></b><b class="tb off"><svg><use href="#znative"/></svg></b><b class="tb"><svg><use href="#zlast"/></svg></b><b class="tb off"><svg><use href="#znext"/></svg></b><b class="tb"><svg><use href="#mapview"/></svg></b><b class="tb"><svg><use href="#map3d"/></svg></b><b class="tb"><svg><use href="#bmnew"/></svg></b><b class="tb"><svg><use href="#bmshow"/></svg></b><b class="tb"><svg><use href="#clock"/></svg></b><b class="tb"><svg><use href="#refresh"/></svg></b>
<i class="grip"></i><b class="tb"><svg><use href="#identify"/></svg></b><b class="tb"><svg><use href="#abacus"/></svg></b><b class="tb"><svg><use href="#gear"/></svg></b><b class="tb"><svg><use href="#sigma"/></svg></b><b class="tb"><svg><use href="#table"/></svg></b><i class="dd"></i><b class="tb"><svg><use href="#measure"/></svg></b><i class="dd"></i><b class="tb"><svg><use href="#maptip"/></svg></b><b class="tb off"><svg><use href="#action"/></svg></b><i class="dd off"></i>
<i class="grip"></i><i class="grip wide"></i><b class="tb"><svg><use href="#qms"/></svg></b><b class="tb"><svg><use href="#osm"/></svg></b></div>

<div class="toolbar"><i class="grip first"></i><b class="tb"><svg><use href="#dsm"/></svg></b><b class="tb"><svg><use href="#gpkg"/></svg></b><b class="tb"><svg><use href="#shpnew"/></svg></b><b class="tb"><svg><use href="#spatialite"/></svg></b><b class="tb"><svg><use href="#chip"/></svg></b><b class="tb"><svg><use href="#mesh"/></svg></b><b class="tb"><svg><use href="#virtual"/></svg></b>
<i class="grip"></i><b class="tb off corner"><svg><use href="#edits"/></svg></b><b class="tb"><svg><use href="#pencil"/></svg></b><b class="tb off"><svg><use href="#saveedit"/></svg></b><b class="tb off"><svg><use href="#line"/></svg></b><i class="dd off"></i><b class="tb off"><svg><use href="#addpts"/></svg></b><b class="tb off"><svg><use href="#vertex"/></svg></b><i class="dd off"></i><b class="tb off"><svg><use href="#multi"/></svg></b><b class="tb off"><svg><use href="#del"/></svg></b><b class="tb off"><svg><use href="#cut"/></svg></b><b class="tb off"><svg><use href="#copy"/></svg></b><b class="tb off"><svg><use href="#paste"/></svg></b><b class="tb off"><svg><use href="#undo"/></svg></b><b class="tb off"><svg><use href="#redo"/></svg></b>
<i class="grip"></i><b class="tb"><svg><use href="#select"/></svg></b><i class="dd"></i><b class="tb"><svg><use href="#selval"/></svg></b><i class="dd"></i><b class="tb"><svg><use href="#desel"/></svg></b><i class="dd"></i><b class="tb"><svg><use href="#selloc"/></svg></b><i class="dd"></i>
<i class="grip narrow"></i><b class="tb"><svg><use href="#label"/></svg></b><b class="tb"><svg><use href="#diagram"/></svg></b><i class="sep"></i><b class="tb"><svg><use href="#labpin"/></svg></b><b class="tb"><svg><use href="#labred"/></svg></b><i class="sep"></i><b class="tb off"><svg><use href="#labg-pin"/></svg></b><b class="tb off"><svg><use href="#labg-eye"/></svg></b><b class="tb off"><svg><use href="#labg-mv"/></svg></b><b class="tb off"><svg><use href="#labg-rot"/></svg></b><b class="tb off"><svg><use href="#labg-ed"/></svg></b>
<i class="grip wide"></i><b class="tb"><svg><use href="#globeadd"/></svg></b><b class="tb"><svg><use href="#globefind"/></svg></b><b class="tb"><svg><use href="#metas"/></svg></b><i class="grip"></i><b class="tb"><svg><use href="#help"/></svg></b></div>

<div class="toolbar"><i class="grip first"></i><b class="tb off"><svg><use href="#advdig"/></svg></b><b class="tb off"><svg><use href="#movef"/></svg></b><i class="dd off"></i><b class="tb off"><svg><use href="#rotf"/></svg></b><b class="tb off"><svg><use href="#scalef"/></svg></b><b class="tb off"><svg><use href="#simp"/></svg></b><b class="tb off"><svg><use href="#ring"/></svg></b><b class="tb off"><svg><use href="#part"/></svg></b><b class="tb off"><svg><use href="#fillr"/></svg></b><b class="tb off"><svg><use href="#delr"/></svg></b><b class="tb off"><svg><use href="#delp"/></svg></b><b class="tb off"><svg><use href="#reshape"/></svg></b><b class="tb off"><svg><use href="#offset"/></svg></b><b class="tb off"><svg><use href="#revline"/></svg></b><b class="tb off"><svg><use href="#trim"/></svg></b><b class="tb off"><svg><use href="#split"/></svg></b><b class="tb off"><svg><use href="#split"/></svg></b><b class="tb off"><svg><use href="#merge"/></svg></b><b class="tb off"><svg><use href="#mergeattr"/></svg></b><b class="tb off"><svg><use href="#rotpt"/></svg></b><i class="dd off"></i>
<i class="grip"></i><b class="tb on"><svg><use href="#magnet"/></svg></b><b class="tb corner"><svg><use href="#snapv"/></svg></b><b class="tb on corner"><svg><use href="#snapt"/></svg></b><span class="spin tol"><span>12</span><svg class="clear" viewBox="0 0 14 10"><path d="M4.500 0H14v10H4.500L0 5z" fill="#888"/><path d="M6 2.500l5 5M11 2.500l-5 5" stroke="#fff" stroke-width="1.300"/></svg><i class="updown"></i></span><span class="combo"><span>px</span><i class="arr"></i></span><b class="tb"><svg><use href="#topo"/></svg></b><b class="tb corner"><svg><use href="#overlap"/></svg></b><b class="tb"><svg><use href="#xsect"/></svg></b><b class="tb"><svg><use href="#selfsnap"/></svg></b><i class="dd"></i><b class="tb"><svg><use href="#trace"/></svg></b>
<i class="grip wide"></i><b class="tb off"><svg><use href="#arc"/></svg></b><b class="tb off"><svg><use href="#circ"/></svg></b><i class="dd off"></i><b class="tb off"><svg><use href="#ell"/></svg></b><i class="dd off"></i><b class="tb off"><svg><use href="#rectg"/></svg></b><i class="dd off"></i><b class="tb off"><svg><use href="#polyg"/></svg></b><i class="dd off"></i>
<i class="grip"></i><b class="tb"><svg><use href="#qgisrs"/></svg></b></div>

<div class="toolbar"><i class="grip first"></i><b class="tb"><svg><use href="#python"/></svg></b><b class="tb"><svg><use href="#rack"/></svg></b><b class="tb"><svg><use href="#earth"/></svg></b><i class="dd"></i><b class="tb"><svg><use href="#cloud"/></svg></b><b class="tb"><svg><use href="#xa"/></svg></b><b class="tb"><svg><use href="#plug"/></svg></b><b class="tb"><svg><use href="#hammer"/></svg></b><span class="reload"><svg><use href="#reload"/></svg><span class="txt">Reload plugin: select_features_by_boundary</span></span><i class="dd"></i><b class="tb"><svg><use href="#slab"/></svg></b><b class="tb"><svg><use href="#leaf"/></svg></b><b class="tb"><svg><use href="#qplug"/></svg></b><b class="tb"><svg><use href="#babel"/></svg></b><b class="tb"><svg><use href="#selfeat"/></svg></b><b class="tb"><svg><use href="#night"/></svg></b><b class="tb"><svg><use href="#compare"/></svg></b><b class="tb"><svg><use href="#xyz"/></svg></b>
<i class="grip far"></i><b class="tb on"><svg><use href="#copydot"/></svg></b><b class="tb on"><svg><use href="#pin"/></svg></b><b class="tb"><svg><use href="#magdot"/></svg></b><b class="tb"><svg><use href="#magdots"/></svg></b><b class="tb"><svg><use href="#extent"/></svg></b><i class="dd"></i><b class="tb"><svg><use href="#dome"/></svg></b><b class="tb off"><svg><use href="#xy"/></svg></b><b class="tb"><svg><use href="#wrench"/></svg></b><i class="grip end"></i></div>

<div class="toolbar"><i class="grip first"></i><b class="tb off"><svg><use href="#meshed"/></svg></b><b class="tb off"><svg><use href="#meshsel"/></svg></b><i class="dd off"></i><b class="tb off"><svg><use href="#mesht"/></svg></b><b class="tb off"><svg><use href="#meshv"/></svg></b><i class="dd off"></i>
<i class="grip"></i><b class="tb"><svg><use href="#annlayer"/></svg></b><i class="dd"></i><b class="tb"><svg><use href="#annsel"/></svg></b><b class="tb"><svg><use href="#annpoly"/></svg></b><b class="tb"><svg><use href="#annline"/></svg></b><b class="tb"><svg><use href="#annstar"/></svg></b><b class="tb"><svg><use href="#anntext"/></svg></b><b class="tb"><svg><use href="#anncurve"/></svg></b><b class="tb"><svg><use href="#annrect"/></svg></b><b class="tb"><svg><use href="#annpic"/></svg></b><i class="sep"></i><b class="tb"><svg><use href="#html"/></svg></b><i class="dd"></i>
<i class="grip"></i><b class="tb gcp"><svg><use href="#gcp"/></svg></b><b class="tb off"><svg><use href="#cross"/></svg></b><i class="sep"></i><b class="tb corner"><svg><use href="#crossb"/></svg></b><b class="tb off"><svg><use href="#crossp"/></svg></b><b class="tb"><svg><use href="#addpts"/></svg></b><b class="tb off"><svg><use href="#trk"/></svg></b><i class="sep"></i><b class="tb"><svg><use href="#info"/></svg></b><b class="tb"><svg><use href="#wrench"/></svg></b></div>

<main class="work">
  <aside class="dock">
    <div class="dock-head"><span class="txt">Layers</span>
      <svg class="dockbtns" viewBox="0 0 26 12"><g fill="none" stroke="#666"><rect x=".5" y=".5" width="10" height="10" rx="2"/><path d="M3 5h3.500v3.500H3zM5 4.500V3h3.500v3.500H7"/><rect x="14.500" y=".5" width="10" height="10" rx="2"/></g><path d="M16.800 2.800l5.400 5.400M22.200 2.800l-5.400 5.400" stroke="#555" stroke-width="1.800"/></svg></div>
    <div class="dock-tools"><svg><use href="#p-brush"/></svg><svg><use href="#p-add"/></svg><b class="corner"><svg><use href="#p-eye"/></svg></b><b class="corner"><svg><use href="#p-filter"/></svg></b><svg><use href="#p-eps"/></svg><i class="dd"></i><svg><use href="#p-exp"/></svg><svg><use href="#p-col"/></svg><svg><use href="#p-rem"/></svg></div>
    <ul class="tree">
      <li><i class="cb on"></i><i class="sw street"></i><span>Street</span></li>
      <li class="sel"><i class="cb on"></i><i class="sw poi"></i><span><u>POI</u></span></li>
      <li class="hidden-layer"><i class="cb"></i><i class="sw parcel"></i><span>Parcel</span></li>
      <li><i class="cb on"></i><i class="sw neigh"></i><span>Neigh</span></li>
    </ul>
    <div class="tabs"><span class="tab t1">Layer Order</span><span class="tab t2">Browser</span><span class="tab cur">Layers</span></div>
  </aside>
  <div class="splitter"></div>
  <section class="canvas">
    <svg class="map" viewBox="263 238 1177 603">
      <g fill="none" stroke="#e31a1c" stroke-width="3.900" stroke-linejoin="round">
        <path d="M260 328L287 376 345 495 374 554 420 645 437 677 455 711 521 843"/>
        <path d="M260 384L287 375 340 351 420 318 556 268"/>
        <path d="M590 260L597 268 607 281 648 342 695 404 748 474 778 514 815 565 834 592 912 694 1003 816"/>
        <path d="M748 474L720 490 645 538 438 667 440 677"/>
        <path d="M815 565L1030 433 1051 421 1300 267"/>
        <path d="M948 266L979 305 969 313 1051 421 1080 461 1140 541 1212 639 1238 673"/>
        <path d="M958 843L1003 816 1070 775 1195 702 1238 673 1442 545"/>
        <path d="M297 842L308 827 328 837 329 842"/>
      </g>
      <g class="poi-pts">
        <circle cx="584" cy="270" r="3.900"/><circle cx="310" cy="316" r="3.900"/><circle cx="363" cy="284" r="3.900"/><circle cx="403" cy="276" r="3.900"/><circle cx="483" cy="308" r="3.900"/><circle cx="557" cy="305" r="3.900"/><circle cx="673" cy="278" r="3.900"/><circle cx="732" cy="299" r="3.900"/><circle cx="722" cy="309" r="3.900"/><circle cx="520" cy="342" r="3.900"/><circle cx="597" cy="346" r="3.900"/><circle cx="649" cy="359" r="3.900"/><circle cx="734" cy="364" r="3.900"/><circle cx="391" cy="367" r="3.900"/><circle cx="310" cy="383" r="3.900"/><circle cx="455" cy="392" r="3.900"/><circle cx="516" cy="386" r="3.900"/><circle cx="646" cy="399" r="3.900"/><circle cx="787" cy="404" r="3.900"/><circle cx="578" cy="420" r="3.900"/><circle cx="292" cy="441" r="3.900"/><circle cx="418" cy="447" r="3.900"/><circle cx="645" cy="469" r="3.900"/><circle cx="707" cy="469" r="3.900"/><circle cx="511" cy="472" r="3.900"/><circle cx="363" cy="482" r="3.900"/><circle cx="453" cy="481" r="3.900"/><circle cx="577" cy="490" r="3.900"/><circle cx="784" cy="499" r="3.900"/><circle cx="337" cy="525" r="3.900"/><circle cx="435" cy="538" r="3.900"/><circle cx="539" cy="556" r="3.900"/><circle cx="601" cy="545" r="3.900"/><circle cx="655" cy="555" r="3.900"/><circle cx="725" cy="546" r="3.900"/><circle cx="762" cy="542" r="3.900"/><circle cx="396" cy="576" r="3.900"/><circle cx="482" cy="589" r="3.900"/><circle cx="333" cy="600" r="3.900"/><circle cx="712" cy="594" r="3.900"/><circle cx="769" cy="597" r="3.900"/><circle cx="685" cy="616" r="3.900"/><circle cx="439" cy="643" r="3.900"/><circle cx="536" cy="646" r="3.900"/><circle cx="778" cy="661" r="3.900"/><circle cx="394" cy="677" r="3.900"/><circle cx="617" cy="690" r="3.900"/><circle cx="491" cy="714" r="3.900"/><circle cx="557" cy="716" r="3.900"/><circle cx="331" cy="722" r="3.900"/><circle cx="435" cy="757" r="3.900"/>
      </g>
      <circle cx="1024" cy="607" r="49.800" fill="none" stroke="#00a2e8" stroke-width="3"/>
      <path d="M1014 605.500h21M1024.500 596v19" stroke="#000" stroke-width="3"/>
    </svg>
    <p class="note"><span>In This Boundary have not</span><br><span>any POI, So When You Click</span><br><span>then Open a Warning Popup</span><br><span>Massage</span></p>
    <div class="msgbar">
      <div class="msgbox"><svg viewBox="0 0 24 22"><path d="M12 1.500L22.500 20.500h-21z" fill="#fbb92a" stroke="#c65d00" stroke-width="1.300" stroke-linejoin="round"/><path d="M11 6h2.400l-.6 8h-1.200zM11 15.500h2.400v2.400H11z" fill="#8c3a00"/></svg><strong>Info:</strong><span class="info">No features found within the clicked polygon in POI</span></div>
      <span class="headline">Show Warning Popup Massage</span>
      <svg class="close" viewBox="0 0 18 18"><circle cx="9" cy="9" r="8.500" fill="#222"/><path d="M5.800 5.800l6.400 6.400M12.200 5.800l-6.400 6.400" stroke="#fff" stroke-width="2.400"/></svg>
    </div>
  </section>
</main>

<footer class="status">
  <span class="field locate"><svg viewBox="0 0 14 14"><circle cx="5.500" cy="5.500" r="4.300" fill="none" stroke="#888" stroke-width="1.300"/><path d="M8.500 8.500l4.500 4.500" stroke="#888" stroke-width="1.500"/></svg><span>Type to locate (Ctrl+K)</span></span>
  <span class="w-msg">0 features selected on layer POI.</span>
  <span class="w-coord">Coordinate</span><span class="field coord">24.74516°, 46.78561°</span>
  <svg class="ic-ext" viewBox="0 0 16 16"><path d="M1 5q0-3 3-3l4 4 2 5-2 3q-3 1-4-2z" fill="#ddd" stroke="#333" stroke-width="1.200"/><path d="M4 2l5 8M2 5l6 6" stroke="#333"/><circle cx="8" cy="12" r="2.500" fill="#fff" stroke="#333" stroke-width="1.300"/><path d="M7 2l3 3M9 1l5 1-4 3 5 1-4 3 4 2-2 3" fill="none" stroke="#444" stroke-width="1.300"/></svg>
  <span class="w-scale">Scale</span><span class="field scale"><span>1:20316</span><i class="drop"><i class="arr"></i></i></span>
  <svg class="ic-lock" viewBox="0 0 12 16"><path d="M2.500 8V5a3.500 3.500 0 0 1 7 0v3" fill="none" stroke="#777" stroke-width="1.800"/><rect y="7" width="12" height="8" rx="1" fill="#5c5c5c"/></svg>
  <span class="w-mag">Magnifier</span><span class="spin"><span>100%</span><i class="updown"></i></span>
  <span class="w-rot">Rotation</span><span class="spin"><span>0.0 °</span><i class="updown"></i></span>
  <i class="cb on"></i><span class="w-ren">Render</span>
  <svg class="ic-crs" viewBox="0 0 24 24"><use href="#dome" width="24" height="24"/></svg><span class="w-epsg">EPSG:4326</span>
  <svg class="ic-log" viewBox="0 0 16 14"><path d="M8 0c5 0 8 2.500 8 6s-3 6-7 6l4 2-7-2C2 11 0 9 0 6s3-6 8-6z" fill="#5c5c5c"/><path d="M3.500 5h2v2h-2zM7 5h2v2H7zM10.500 5h2v2h-2z" fill="#eee"/></svg>
</footer>
</body>
</html>
```
FILE: styles.css
```css
* { box-sizing: border-box; }
body {
  margin: 0; width: 1440px; height: 870px; overflow: hidden;
  display: flex; flex-direction: column;
  background: #efefef; color: #000;
  font: 11px/14px "Noto Sans", "Open Sans", sans-serif;
  letter-spacing: -0.2px;
  white-space: nowrap;
}
u { text-underline-offset: 2px; }
.sprite { position: absolute; }
.sprite text, .tb svg { letter-spacing: 0; }
.glyph { font-family: "Open Sans", sans-serif; fill: #333; }
.glyph.b { font-weight: bold; }
text.glyph:not(.b) { font-weight: normal; }
.tagtxt { font: bold 8.5px "DejaVu Sans Condensed", "DejaVu Sans", sans-serif; fill: #333; stroke: none; }
.tagtxt.red { fill: #e00000; }
.serif-i { font-family: "Liberation Serif", serif; font-style: italic; font-weight: bold; fill: #fff; }
.serifw { font-family: "Liberation Serif", serif; fill: #fff; }
.serifb { font-family: "Liberation Serif", serif; fill: #444; font-weight: bold; }
.xyz { font: bold 6px "Open Sans", sans-serif; fill: #222; }

.titlebar { height: 23px; flex: none; background: #fff; display: flex; align-items: center; padding-left: 2px; }
.logo { width: 16px; height: 16px; }
.title { margin-left: 5px; font-size: 12px; letter-spacing: -0.43px; }
.winbtns { width: 102px; height: 12px; margin: -1px 19px 0 auto; }

.menubar { height: 20px; flex: none; border-bottom: 1px solid #d4d4d4; display: flex; align-items: center; gap: 14px; padding: 1px 0 0 10px; font-size: 12px; letter-spacing: -0.35px; }
.m1 { width: 37px; } .m2 { width: 20px; } .m3 { width: 25px; } .m4 { width: 28px; } .m5 { width: 42px; }
.m6 { width: 39px; } .m7 { width: 33px; } .m8 { width: 32px; } .m9 { width: 48px; } .m10 { width: 24px; }
.m11 { width: 29px; } .m12 { width: 57px; } .m13 { width: 25px; }

.toolbar { height: 39px; flex: none; display: flex; align-items: center; border-bottom: 1px solid #b4b4b4; background: linear-gradient(#fafafa, #efefef); }
.toolbar:nth-of-type(5) { height: 38px; }
.tb { width: 33px; height: 32px; flex: none; padding: 4px 5px 4px 4px; position: relative; }
.tb svg, .reload svg { display: block; width: 24px; height: 24px; overflow: visible; flex: none; }
.tb.off svg { filter: grayscale(.75); opacity: .34; }
.tb.on { border: 1px solid #9c9c9c; border-radius: 2px; background: #d9d9d9; padding: 3px 4px 3px 3px; width: 32px; margin-right: 1px; }
.tb.gcp { padding-left: 5px; }
.corner { position: relative; }
.corner::after { content: ""; position: absolute; right: 3px; bottom: 3px; border: 3px solid transparent; border-top-color: #444; border-bottom: 0; }
.corner.off::after { border-top-color: #aaa; }
.grip { width: 16px; height: 17px; flex: none; padding-left: 8px; background: radial-gradient(circle at .5px .5px, #a0a0a0 .6px, transparent .8px) 0 0 / 3px 3px content-box; padding-right: 4px; }
.grip.first { width: 13px; padding-left: 5px; }
.grip.wide { width: 17px; padding-left: 9px; }
.grip.narrow { width: 15px; padding-left: 7px; }
.grip.far { width: 103px; padding-left: 95px; }
.grip.end { width: 25px; padding: 0 1px 0 20px; }
.dd { width: 12px; flex: none; }
.dd::before { content: ""; display: block; margin-left: 1px; width: 0; border: 4px solid transparent; border-top-color: #555; border-bottom: 0; }
.dd.off::before { border-top-color: #a4a4a4; }
.sep { width: 7px; height: 20px; flex: none; border-left: 1px solid #ccc; margin-left: 4px; margin-right: -4px; }
.reload { width: 258px; display: flex; align-items: center; padding-left: 3px; }
.reload .txt { margin: 1px 0 0 1px; letter-spacing: -0.25px; }

.field, .spin, .combo { background: #fff; border: 1px solid #b0b0b0; border-radius: 2px; display: flex; align-items: center; flex: none; height: 22px; letter-spacing: 0; }
.spin { width: 84px; padding-left: 5px; }
.tol { height: 21px; }
.clear { width: 13px; height: 10px; margin-left: auto; margin-right: 11px; }
.updown { width: 14px; height: 100%; border-left: 1px solid #b0b0b0; display: flex; flex-direction: column; align-items: center; justify-content: center; gap: 4px; margin-left: auto; }
.clear + .updown { margin-left: 0; }
.updown::before, .updown::after { content: ""; border: 4px solid transparent; }
.updown::before { border-top: 0; border-bottom-color: #555; }
.updown::after { border-bottom: 0; border-top-color: #555; }
.combo { width: 88px; margin-left: 1px; margin-right: 1px; padding: 0 7px 0 3px; background: linear-gradient(#fdfdfd, #f1f1f1); justify-content: space-between; }
.arr { border: 4px solid transparent; border-top-color: #555; border-bottom: 0; }
.drop { width: 20px; height: 100%; border-left: 1px solid #b0b0b0; background: #f6f6f6; display: flex; align-items: center; justify-content: center; }

.work { flex: 1; min-height: 0; display: flex; }
.dock { width: 256px; flex: none; display: flex; flex-direction: column; }
.dock-head { height: 22px; display: flex; align-items: center; justify-content: space-between; padding: 0 1px 0 4px; }
.dockbtns { width: 26px; height: 12px; }
.dock-tools { height: 29px; display: flex; align-items: center; gap: 9px; padding: 0 0 3px 7px; }
.dock-tools svg { display: block; width: 16px; height: 16px; flex: none; }
.dock-tools .corner::after { right: -2px; bottom: -1px; }
.dock-tools .dd { margin: 0 -3px 0 -5px; }
.tree { flex: 1; margin: 0; padding: 0; list-style: none; background: #fff; border: 1px solid #b0b0b0; font-weight: bold; font-size: 11.5px; }
.tree li { height: 18px; display: flex; align-items: center; padding-left: 23px; }
.tree li.sel { background: #efefef; }
.tree span { margin-left: 6px; padding-top: 1px; letter-spacing: -0.1px; }
.tree .hidden-layer span { font-style: italic; color: #8c8c8c; letter-spacing: 0.2px; }
.cb { width: 14px; height: 14px; flex: none; border: 1px solid #b8b8b8; background: #fff; position: relative; }
.cb.on::after { content: ""; position: absolute; left: 4px; top: 0; width: 4px; height: 8px; border: solid #000; border-width: 0 2px 2px 0; transform: rotate(32deg); }
.sw { width: 16px; height: 16px; flex: none; margin-left: 6px; }
.street { height: 2px; width: 14px; background: #c8ced2; }
.poi { width: 7px; height: 7px; border-radius: 50%; background: #ee4410; border: 1px solid #7a3a20; margin: 0 4px 0 11px; }
.parcel { background: #739c70; border: 1px solid #3c5c3c; }
.neigh { border: 2px solid #e31a1c; }
.tabs { height: 24px; flex: none; margin-top: 1px; display: flex; border-top: 1px solid #b4b4b4; align-items: flex-start; }
.tab { height: 21px; border: 1px solid #b8b8b8; border-top: 0; border-radius: 0 0 3px 3px; background: #dcdcdc; line-height: 20px; text-align: center; }
.t1 { width: 83px; padding-right: 3px; } .t2 { width: 63px; border-left: 0; padding-right: 3px; }
.tab.cur { width: 55px; height: 23px; line-height: 22px; background: #f6f6f6; border-left: 0; padding-right: 2px; }
.splitter { width: 6px; height: 17px; margin-top: 295px; padding-left: 3px; background: radial-gradient(circle at .5px .5px, #aaa .6px, transparent .8px) 0 0 / 4px 3px content-box; }

.canvas { flex: 1; min-width: 0; position: relative; background: #fff; border: 1px solid #b0b0b0; border-right: 1px solid #b8b8b8; }
.map { display: block; width: 1177px; height: 603px; }
.poi-pts circle { fill: #ff420a; stroke: #33281f; stroke-width: 1; }
.msgbar { position: absolute; left: 0; top: 0; width: 1177px; height: 30px; background: #ffc800; border: solid #e0a800; border-width: 1px 0; display: flex; align-items: center; }
.msgbox { margin: -3px 0 -4px -3px; width: 377px; height: 35px; border: 3px solid #ed1c24; display: flex; align-items: center; padding-left: 9px; flex: none; }
.msgbox svg { width: 24px; height: 22px; }
.msgbox strong { margin-left: 10px; letter-spacing: -0.2px; }
.info { margin-left: 3px; letter-spacing: -0.41px; }
.headline { margin: -4px 0 0 7px; font: bold 15px/18px Lato, "Open Sans", sans-serif; letter-spacing: 0.27px; }
.close { width: 18px; height: 18px; margin-left: auto; margin-right: 23px; }
.note { position: absolute; left: 678px; top: 422px; margin: 0; color: #00a2e8; font: bold 14.5px/19px Lato, "Open Sans", sans-serif; letter-spacing: 0.54px; }

.status { height: 28px; flex: none; display: flex; align-items: center; padding: 1px 0 0 4px; }
.locate { width: 200px; padding-left: 7px; color: #888; }
.locate svg { width: 14px; height: 14px; margin-right: 6px; }
.w-msg { width: 407px; margin-left: 7px; letter-spacing: -0.22px; }
.w-coord { width: 57px; letter-spacing: -0.45px; }
.coord { width: 124px; padding-left: 5px; }
.ic-ext { width: 16px; height: 16px; margin: 0 12px 0 4px; }
.w-scale { width: 29px; }
.scale { width: 80px; padding-left: 3px; justify-content: space-between; }
.ic-lock { width: 12px; height: 16px; margin: 0 8px 0 13px; }
.w-mag { width: 48px; letter-spacing: -0.5px; }
.w-rot { width: 51px; margin-left: 8px; }
.status .cb { margin: 0 5px 0 7px; }
.w-ren { width: 51px; }
.ic-crs { width: 16px; height: 16px; margin-left: -2px; }
.w-epsg { width: 78px; margin-left: 1px; }
.ic-log { width: 16px; height: 14px; margin-left: -1px; }
```
